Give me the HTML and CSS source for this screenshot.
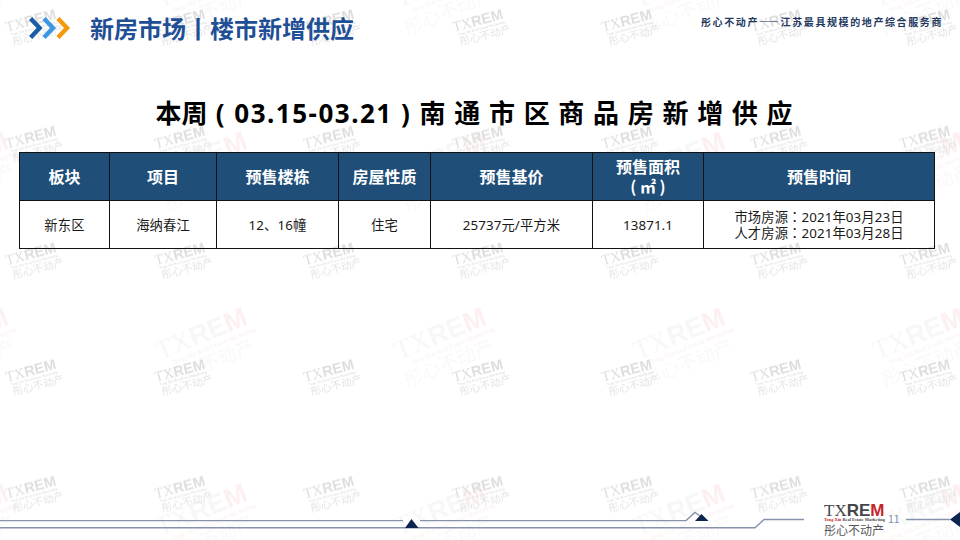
FILE: index.html
```html
<!DOCTYPE html>
<html lang="zh-CN">
<head>
<meta charset="utf-8">
<title>新房市场丨楼市新增供应</title>
<link rel="stylesheet" href="styles.css">
</head>
<body>
<div class="slide">
  <svg class="watermark" width="960" height="540" aria-hidden="true">
    <defs>
      <pattern id="wm-big" width="239" height="176" patternUnits="userSpaceOnUse" patternTransform="translate(150 123)">
        <g transform="translate(10 61) rotate(-22)">
          <text class="wb-main"><tspan class="serif">TX</tspan><tspan class="wb-re">RE</tspan><tspan class="wb-m">M</tspan></text>
          <text class="wb-tiny" x="10" y="9">Tong Xin Real Estate Marketing</text>
        </g>
        <text class="wb-cn" transform="translate(18 88) rotate(-22)">彤心不动产</text>
      </pattern>
      <pattern id="wm-small" width="149" height="116.67" patternUnits="userSpaceOnUse" patternTransform="translate(2 7)">
        <g transform="translate(5 25) rotate(-15)">
          <text class="ws-main"><tspan class="serif">TX</tspan><tspan class="ws-re">REM</tspan></text>
          <text class="ws-tiny" x="3" y="4.6">Tong Xin Real Estate Marketing</text>
          <text class="ws-cn" x="3" y="15">彤心不动产</text>
        </g>
      </pattern>
    </defs>
    <rect width="960" height="540" fill="url(#wm-big)"/>
    <rect width="960" height="540" fill="url(#wm-small)"/>
  </svg>

  <header class="topbar">
    <svg class="chevrons" width="42" height="22" viewBox="0 0 42 22" aria-hidden="true">
      <path class="chev chev-1" d="M1.6 1.6 L10.6 11 L1.6 20.4"/>
      <path class="chev chev-2" d="M15 1.6 L24 11 L15 20.4"/>
      <path class="chev chev-3" d="M29 1.6 L38 11 L29 20.4"/>
    </svg>
    <h2 class="section-title">新房市场丨楼市新增供应</h2>
    <p class="tagline">彤心不动产——江苏最具规模的地产综合服务商</p>
  </header>

  <h1 class="main-title">本周<span class="latin"> ( 03.15-03.21 ) </span>南 通 市 区 商 品 房 新 增 供 应</h1>

  <table class="supply">
    <colgroup>
      <col class="c1"><col class="c2"><col class="c3"><col class="c4"><col class="c5"><col class="c6"><col class="c7">
    </colgroup>
    <thead>
      <tr>
        <th>板块</th><th>项目</th><th>预售楼栋</th><th>房屋性质</th><th>预售基价</th><th>预售面积<br>( ㎡ )</th><th>预售时间</th>
      </tr>
    </thead>
    <tbody>
      <tr>
        <td>新东区</td><td>海纳春江</td><td>12、16幢</td><td>住宅</td><td>25737元/平方米</td><td>13871.1</td>
        <td>市场房源<span class="colon" lang="zh-TW">：</span>2021年03月23日<br>人才房源<span class="colon" lang="zh-TW">：</span>2021年03月28日</td>
      </tr>
    </tbody>
  </table>

  <footer class="footer">
    <svg class="rules" width="960" height="40" viewBox="0 500 960 40" aria-hidden="true">
      <path class="rule" d="M0 520.6 H403 M420 520.6 H686 L695 512.5 L700 516"/>
      <path class="rule" d="M0 527.8 H755 L764 519.5 H804"/>
      <path class="rule" d="M906 519.5 H950"/>
      <path class="mark" d="M411.5 519 L418.5 528 H405 Z"/>
      <path class="mark" d="M701.5 514 L708.5 521 H695 Z"/>
      <path class="mark" d="M960 512 V527 L950 519.5 Z"/>
    </svg>
    <svg class="logo" width="62" height="36" viewBox="0 0 62 36" role="img" aria-label="TXREM 彤心不动产">
      <text class="logo-word" y="13.5"><tspan class="serif">TX</tspan><tspan class="logo-re">RE</tspan><tspan class="logo-m">M</tspan></text>
      <text class="logo-tiny" y="18.6"><tspan class="logo-red">Tong Xin</tspan> Real Estate Marketing</text>
      <text class="logo-cn" y="33">彤心不动产</text>
    </svg>
    <span class="page-no">11</span>
  </footer>
</div>
</body>
</html>
```

FILE: styles.css
```css
* { box-sizing: border-box; }
html, body { margin: 0; padding: 0; background: #fff; }
body { font-family: "Noto Sans CJK SC", "Noto Sans", sans-serif; }

.slide {
  position: relative;
  width: 960px;
  height: 540px;
  overflow: hidden;
  display: flex;
  flex-direction: column;
  background: #fff;
}

/* watermark layer */
.watermark { position: absolute; left: 0; top: 0; filter: blur(0.45px); }
.serif { font-family: "Liberation Serif", serif; font-weight: 400; }
.wb-main { font-size: 27px; fill: #f7f7f8; }
.wb-re { font-family: "Liberation Sans", sans-serif; font-weight: 700; }
.wb-m { font-family: "Liberation Sans", sans-serif; font-weight: 700; fill: #fcf0f0; }
.wb-tiny { font-family: "Liberation Serif", serif; font-size: 6.5px; font-weight: 700; fill: #fcf3f3; }
.wb-cn { font-size: 19px; fill: #f9f9fa; }
.ws-main { font-size: 14.5px; fill: #dedede; }
.ws-re { font-family: "Liberation Sans", sans-serif; font-weight: 700; }
.ws-tiny { font-family: "Liberation Serif", serif; font-size: 3.5px; font-weight: 700; fill: #dedede; }
.ws-cn { font-size: 10.5px; fill: #e4e4e4; }

/* top bar */
.topbar {
  position: relative;
  display: flex;
  align-items: center;
  height: 58px;
  padding: 0 17px 2px 29px;
}
.chevrons { flex: none; margin-right: 19px; }
.chev { fill: none; stroke-width: 4.4; }
.chev-1 { stroke: #1a5ca6; }
.chev-2 { stroke: #3f96e2; }
.chev-3 { stroke: #f7990d; }
.section-title {
  margin: 0;
  font-size: 24px;
  font-weight: 700;
  line-height: 30px;
  color: #1f4f95;
}
.tagline {
  margin: 0 0 12px auto;
  font-size: 10px;
  font-weight: 700;
  line-height: 14px;
  letter-spacing: 1.6px;
  color: #23395f;
}

/* heading */
.main-title {
  position: relative;
  height: 59px;
  margin: 35px 0 0;
  padding-right: 12px;
  font-size: 26px;
  line-height: 38px;
  font-weight: 700;
  color: #000;
  text-align: center;
  word-spacing: 2.8px;
  white-space: nowrap;
}
.latin {
  font-family: "Noto Sans", sans-serif;
  letter-spacing: 1.5px;
  word-spacing: 0;
}

/* table */
.supply {
  position: relative;
  width: 915px;
  margin: 0 0 0 19px;
  border-collapse: collapse;
  table-layout: fixed;
}
.c1 { width: 90px; }
.c2 { width: 107px; }
.c3 { width: 122px; }
.c4 { width: 92px; }
.c5 { width: 162px; }
.c6 { width: 111px; }
.c7 { width: 231px; }
.supply th, .supply td {
  border: 1px solid #111;
  padding: 0;
  height: 48px;
  text-align: center;
  vertical-align: middle;
}
.supply th {
  padding-bottom: 2px;
  background: #1f4e79;
  color: #fff;
  font-size: 16px;
  font-weight: 700;
  line-height: 20px;
}
.supply td {
  color: #1a1a1a;
  font-family: "Noto Sans", "Noto Sans CJK SC", sans-serif;
  font-size: 13.33px;
  line-height: 16px;
  letter-spacing: 0.1px;
}
.colon { font-family: "Noto Sans CJK TC", sans-serif; }

/* footer */
.footer {
  position: relative;
  margin-top: auto;
  height: 40px;
  display: flex;
  justify-content: flex-end;
  align-items: flex-start;
  padding-right: 61px;
}
.rules { position: absolute; left: 0; top: 0; }
.rule { fill: none; stroke: #8693ab; stroke-width: 1.4; }
.mark { fill: #0d2350; }
.logo { position: relative; flex: none; margin-top: 2px; }
.logo-word { font-size: 17px; fill: #45464a; }
.logo-re { font-family: "Liberation Sans", sans-serif; font-weight: 700; }
.logo-m { font-family: "Liberation Sans", sans-serif; font-weight: 700; fill: #c8242b; }
.logo-tiny { font-family: "Liberation Serif", serif; font-size: 4.4px; font-weight: 700; fill: #45464a; }
.logo-red { fill: #c8242b; }
.logo-cn { font-size: 12px; fill: #55565a; }
.page-no {
  position: relative;
  margin: 12px 0 0 2px;
  width: 11px;
  font-size: 10.5px;
  line-height: 14px;
  color: #7b8fad;
}
```
